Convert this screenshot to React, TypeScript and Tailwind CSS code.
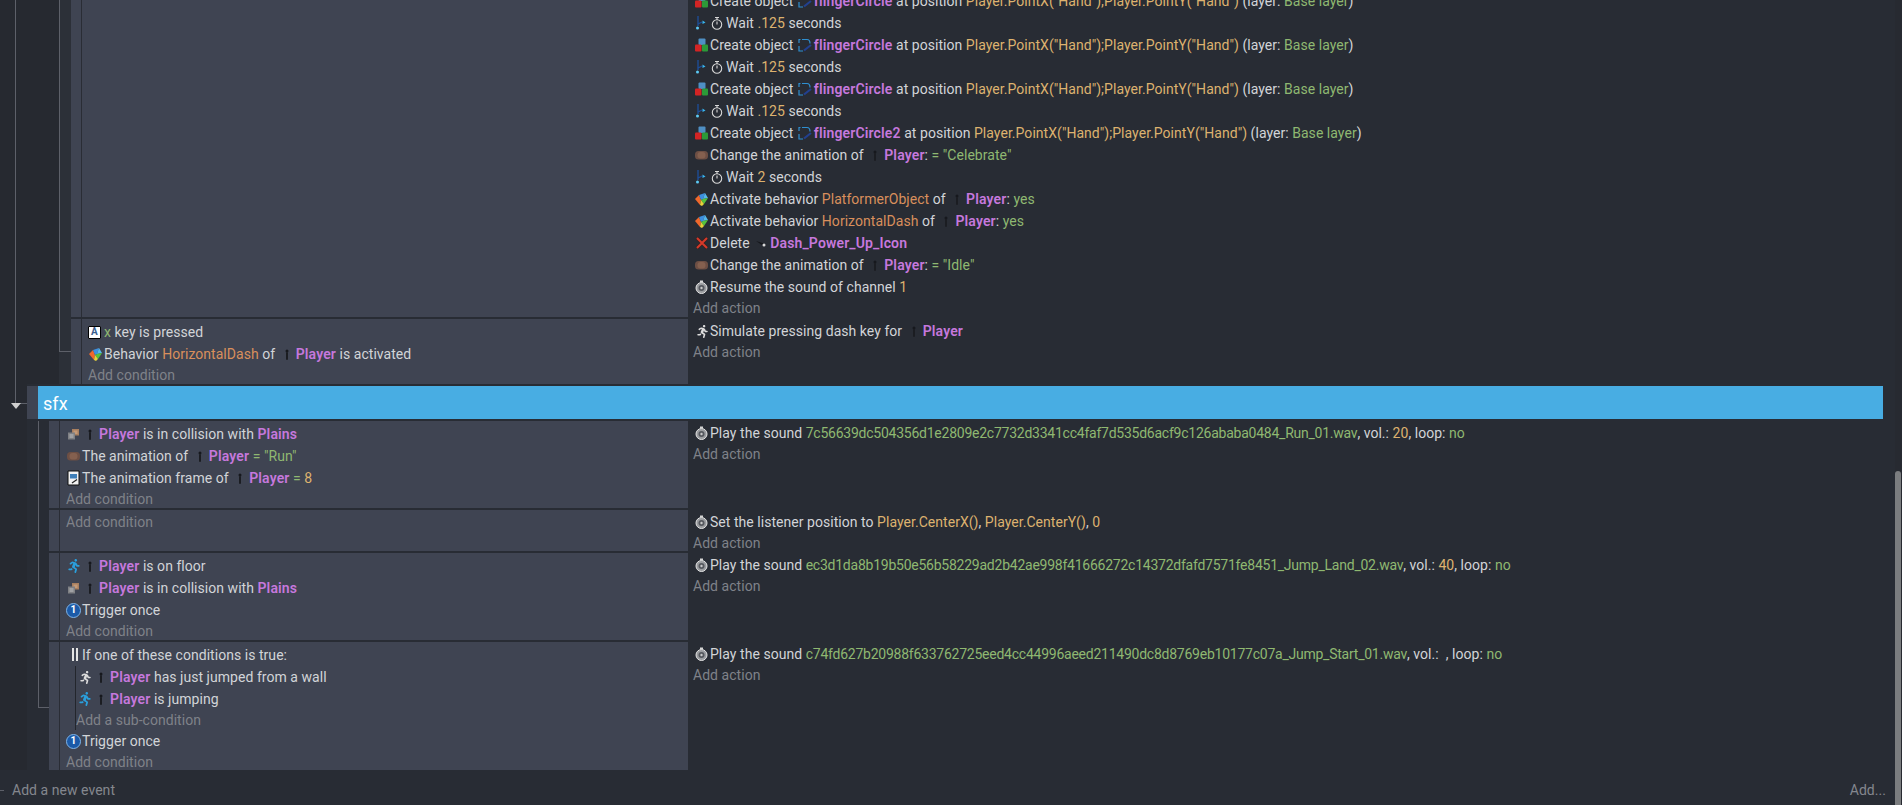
import type { ReactNode } from 'react';
import { FaRunning } from 'react-icons/fa';

const K = ({ children }: { children: ReactNode }) => <span className="font-semibold tracking-[0.15px] text-[#c678dd]">{children}</span>;
const O = ({ children }: { children: ReactNode }) => <span className="text-[#d98f5c]">{children}</span>;
const Y = ({ children }: { children: ReactNode }) => <span className="text-[#ddb26f]">{children}</span>;
const G = ({ children }: { children: ReactNode }) => <span className="text-[#8fb871]">{children}</span>;

// small inline object icons
const PlayerIcon = () => (
  <svg viewBox="0 0 16 16" className="inline-block h-4 w-4 mr-px align-[-3px]">
    <circle cx="8" cy="5" r="1.5" fill="#16181d" />
    <rect x="7" y="6" width="2" height="8" rx="1" fill="#1b1d22" />
  </svg>
);

const FlingerIcon = () => (
  <svg viewBox="0 0 16 16" className="inline-block h-4 w-4 mr-px align-[-3px]" fill="none">
    <path d="M2 6V2.500H3.500M5 2.500H10Q13 2.500 13 6.500" stroke="#2f8fd0" strokeWidth="1.200" />
    <path d="M2 9V14H6" stroke="#2f8fd0" strokeWidth="1.200" />
    <path d="M7 13.500L14 8" stroke="#22408f" strokeWidth="2.200" />
  </svg>
);

const DashIcon = () => (
  <svg viewBox="0 0 16 16" className="inline-block h-4 w-4 mr-px align-[-3px]">
    <path d="M3 6L11 8.500L9 10Z" fill="#14161a" />
    <circle cx="11" cy="10" r="1.500" fill="#d8d8d8" />
  </svg>
);

// row icons, 16px boxes
const Cubes = () => (
  <svg viewBox="0 0 16 16" className="h-4 w-4 shrink-0">
    <rect x="4.500" y="1.500" width="7" height="6.500" rx="1" fill="#4f8fc4" />
    <rect x="1" y="7.500" width="6.500" height="7" rx="1" fill="#d32424" />
    <rect x="8" y="7.500" width="6" height="7" rx="1" fill="#2c9a38" />
  </svg>
);

const WaitIcons = () => (
  <>
    <svg viewBox="0 0 16 16" className="h-4 w-4 shrink-0" fill="none">
      <path d="M4 1V11" stroke="#1d4f9c" strokeWidth="1.300" />
      <path d="M4 9L8 7" stroke="#1d4f9c" strokeWidth="1.300" />
      <path d="M8.500 5.500L11.500 7.500L8.500 9Z" fill="#38b6f0" />
      <circle cx="3.500" cy="13" r="1.500" fill="#5ccaf5" />
    </svg>
    <svg viewBox="0 0 16 16" className="h-4 w-4 shrink-0" fill="none" stroke="#d8d8d8">
      <circle cx="7" cy="9.500" r="4.700" strokeWidth="1.100" />
      <path d="M5 2.500H9M7 2.500V5M7 6.500V9.500" strokeWidth="1.100" />
    </svg>
  </>
);

const AnimIcon = () => (
  <svg viewBox="0 0 16 16" className="h-4 w-4 shrink-0 blur-[0.4px]">
    <rect x="1" y="4" width="13" height="8.500" rx="3.500" fill="#6d4f44" />
    <rect x="3.500" y="5" width="8" height="6.500" rx="3" fill="#84604f" />
  </svg>
);

const Gem = () => (
  <svg viewBox="0 0 16 16" className="h-4 w-4 shrink-0">
    <path d="M1 8L5 4L7 9L6 14Z" fill="#f0682c" />
    <path d="M5 4L11 2L9 8L7 9Z" fill="#3d8fe0" />
    <path d="M11 2L14 7L9 8Z" fill="#55b7ea" />
    <path d="M7 9L9 8L14 7L10 13Z" fill="#55c23c" />
    <path d="M6 14L7 9L10 13L8 15Z" fill="#e6d23a" />
  </svg>
);

const DeleteIcon = () => (
  <svg viewBox="0 0 16 16" className="h-4 w-4 shrink-0" fill="none">
    <path d="M3 3L13 13M13 3L3 13" stroke="#3a2020" strokeWidth="3.500" />
    <path d="M3 3L13 13M13 3L3 13" stroke="#d63a2a" strokeWidth="2" />
  </svg>
);

const SoundIcon = () => (
  <svg viewBox="0 0 16 16" className="h-4 w-4 shrink-0" fill="none">
    <circle cx="7.500" cy="9" r="5.500" fill="#9a9c9f" stroke="#e2e2e2" />
    <circle cx="7.500" cy="9" r="3" fill="#55585e" />
    <circle cx="7.500" cy="9" r="1.200" fill="#c8c8c8" />
    <rect x="6" y="1.500" width="3" height="2" fill="#d6d6d6" />
  </svg>
);

const WhiteRunner = () => (
  <span className="flex h-4 w-4 shrink-0 items-center justify-center">
    <FaRunning className="h-[13px] w-[13px] text-[#dcdcdc]" />
  </span>
);

const BlueRunner = () => (
  <span className="flex h-4 w-4 shrink-0 items-center justify-center">
    <FaRunning className="h-[14px] w-[14px] text-[#2a9fdc]" />
  </span>
);

const KeyIcon = () => (
  <span className="flex h-4 w-4 shrink-0 items-center">
    <span className="flex h-[13px] w-[13px] items-center justify-center rounded-[1px] border border-black bg-white text-[10px] font-bold text-[#3a5f8f]">A</span>
  </span>
);

const Collision = () => (
  <svg viewBox="0 0 16 16" className="h-4 w-4 shrink-0">
    <rect x="6" y="3" width="7" height="6.500" fill="#a87f5f" />
    <rect x="7.500" y="4.500" width="4" height="3.500" fill="#c49a78" />
    <rect x="2" y="6.500" width="7" height="7" fill="#7f8084" />
    <rect x="3.500" y="8" width="4" height="4" fill="#a0a1a4" />
  </svg>
);

const FrameIcon = () => (
  <svg viewBox="0 0 16 16" className="h-4 w-4 shrink-0">
    <path d="M2 1H13V15H2Z" fill="#f2f2f2" stroke="#111" />
    <rect x="4" y="4" width="7" height="4.500" fill="#3f7fb8" />
    <path d="M6 13L11 9.500" stroke="#222" strokeWidth="1.200" />
  </svg>
);

const OnceIcon = () => (
  <span className="flex h-4 w-4 shrink-0 items-center">
    <span className="flex h-[15px] w-[15px] items-center justify-center rounded-full border border-[#7fb4e8] bg-[#1b5aa8] text-[10px] font-bold text-white">1</span>
  </span>
);

const OrIcon = () => (
  <span className="flex h-4 w-4 shrink-0 justify-center gap-[2px] pl-[1px] pt-px">
    <span className="h-[13px] w-[2px] bg-[#e4e4e4]" />
    <span className="h-[13px] w-[2px] bg-[#e4e4e4]" />
  </span>
);

const Row = ({ icon, children }: { icon: ReactNode; children: ReactNode }) => (
  <div className="flex h-[22px] items-center whitespace-pre">
    {icon}
    <span>{children}</span>
  </div>
);

const AddRow = ({ label }: { label: string }) => (
  <div className="flex h-[19px] items-center text-[#7f8289]">{label}</div>
);

const Hash = ({ file, vol }: { file: string; vol?: string }) => (
  <Row icon={<SoundIcon />}>
    Play the sound <span className="tracking-[-0.24px]"><G>{file}</G></span>, vol.: <Y>{vol}</Y>{vol ? '' : ' '}, loop: <G>no</G>
  </Row>
);

const CreateRow = ({ name }: { name: string }) => (
  <Row icon={<Cubes />}>
    Create object <FlingerIcon />
    <K>{name}</K> at position <Y>Player.PointX("Hand");Player.PointY("Hand")</Y> (layer: <G>Base layer</G>)
  </Row>
);

const WaitRow = ({ time }: { time: string }) => (
  <Row icon={<WaitIcons />}>
    Wait <Y>{time}</Y> seconds
  </Row>
);

const Player = () => (
  <>
    <PlayerIcon />
    <K>Player</K>
  </>
);

// one event: gutter tab + conditions cell + actions cell
const Event = ({ height, pad, cond, conditions, actions }: { height: string; pad: string; cond: string; conditions: ReactNode; actions: ReactNode }) => (
  <div className={`flex ${height}`}>
    <div className="w-[10px] shrink-0 border-r border-[#2a2d35] bg-[#3f4452] box-content" />
    <div className={`${cond} shrink-0 overflow-hidden bg-[#3f4452] pl-[6px] pt-[2px]`}>{conditions}</div>
    <div className={`min-w-0 flex-1 overflow-hidden pl-[6px] ${pad}`}>{actions}</div>
  </div>
);

const AddCondition = () => <AddRow label="Add condition" />;
const AddAction = () => <div className="-ml-px"><AddRow label="Add action" /></div>;

export default function App() {
  return (
    <div className="flex h-[805px] w-full overflow-hidden bg-[#282c34] text-[14px] leading-[22px] tracking-[0.04px] text-[#d2d4d8] font-['Roboto',sans-serif]">
      <div className="min-w-0 flex-1">
        <div className="-mt-[10px] flex">
          {/* outer tree line */}
          <div className="w-[27px] shrink-0 bg-[#262930] pl-[15px]">
            <div className="relative h-[414px] w-[12px] border-b border-l border-[#5d6069]">
              <svg viewBox="0 0 10 6" className="absolute -bottom-[6px] -left-[5px] h-[6px] w-[10px]">
                <path d="M0 0H10L5 6Z" fill="#cfcfcf" />
              </svg>
            </div>
          </div>

          <div className="min-w-0 flex-1">
            {/* events above the group */}
            <div className="flex bg-[#282c34]">
              <div className="w-[32px] shrink-0 bg-[#262930]" />
              <div className="w-[12px] shrink-0 bg-[#2c3038]">
                <div className="h-[362px] w-[12px] border-b border-l border-[#5d6069]" />
              </div>
              <div className="flex min-w-0 flex-1 flex-col gap-[2px]">
                <Event
                  height="h-[327px]"
                  pad="pt-0"
                  cond="w-[606px]"
                  conditions={null}
                  actions={
                    <>
                      <CreateRow name="flingerCircle" />
                      <WaitRow time=".125" />
                      <CreateRow name="flingerCircle" />
                      <WaitRow time=".125" />
                      <CreateRow name="flingerCircle" />
                      <WaitRow time=".125" />
                      <CreateRow name="flingerCircle2" />
                      <Row icon={<AnimIcon />}>
                        Change the animation of <Player />: <G>=</G> <G>"Celebrate"</G>
                      </Row>
                      <WaitRow time="2" />
                      <Row icon={<Gem />}>
                        Activate behavior <O>PlatformerObject</O> of <Player />: <G>yes</G>
                      </Row>
                      <Row icon={<Gem />}>
                        Activate behavior <O>HorizontalDash</O> of <Player />: <G>yes</G>
                      </Row>
                      <Row icon={<DeleteIcon />}>
                        Delete <DashIcon />
                        <K>Dash_Power_Up_Icon</K>
                      </Row>
                      <Row icon={<AnimIcon />}>
                        Change the animation of <Player />: <G>=</G> <G>"Idle"</G>
                      </Row>
                      <Row icon={<SoundIcon />}>
                        Resume the sound of channel <Y>1</Y>
                      </Row>
                      <AddAction />
                    </>
                  }
                />
                <Event
                  height="h-[65px]"
                  pad="pt-px"
                  cond="w-[606px]"
                  conditions={
                    <>
                      <Row icon={<KeyIcon />}>
                        <G>x</G> key is pressed
                      </Row>
                      <Row icon={<Gem />}>
                        Behavior <O>HorizontalDash</O> of <Player /> is activated
                      </Row>
                      <AddCondition />
                    </>
                  }
                  actions={
                    <>
                      <Row icon={<WhiteRunner />}>
                        Simulate pressing dash key for <Player />
                      </Row>
                      <AddAction />
                    </>
                  }
                />
              </div>
            </div>

            {/* group header */}
            <div className="mt-[2px] mr-[12px] flex h-[33px]">
              <div className="w-[11px] shrink-0 bg-[#3f4452]" />
              <div className="flex-1 bg-[#48ade3] pl-[5px] text-[18px] leading-[35px] text-white">sfx</div>
            </div>

            {/* events in the group */}
            <div className="mt-[2px] flex">
              <div className="w-[11px] shrink-0 border-l border-transparent" />
              <div className="w-[11px] shrink-0">
                <div className="h-[287px] w-[11px] border-b border-l border-[#5d6069]" />
              </div>
              <div className="flex min-w-0 flex-1 flex-col gap-[2px]">
                <Event
                  height="h-[87px]"
                  pad="pt-px"
                  cond="w-[628px]"
                  conditions={
                    <>
                      <Row icon={<Collision />}>
                        <Player /> is in collision with <K>Plains</K>
                      </Row>
                      <Row icon={<AnimIcon />}>
                        The animation of <Player /> <G>=</G> <G>"Run"</G>
                      </Row>
                      <Row icon={<FrameIcon />}>
                        The animation frame of <Player /> <G>=</G> <Y>8</Y>
                      </Row>
                      <AddCondition />
                    </>
                  }
                  actions={
                    <>
                      <Hash file="7c56639dc504356d1e2809e2c7732d3341cc4faf7d535d6acf9c126ababa0484_Run_01.wav" vol="20" />
                      <AddAction />
                    </>
                  }
                />
                <Event
                  height="h-[41px]"
                  pad="pt-px"
                  cond="w-[628px]"
                  conditions={<AddCondition />}
                  actions={
                    <>
                      <Row icon={<SoundIcon />}>
                        Set the listener position to <Y>Player.CenterX()</Y>, <Y>Player.CenterY()</Y>, <Y>0</Y>
                      </Row>
                      <AddAction />
                    </>
                  }
                />
                <Event
                  height="h-[87px]"
                  pad="pt-px"
                  cond="w-[628px]"
                  conditions={
                    <>
                      <Row icon={<BlueRunner />}>
                        <Player /> is on floor
                      </Row>
                      <Row icon={<Collision />}>
                        <Player /> is in collision with <K>Plains</K>
                      </Row>
                      <Row icon={<OnceIcon />}>Trigger once</Row>
                      <AddCondition />
                    </>
                  }
                  actions={
                    <>
                      <Hash file="ec3d1da8b19b50e56b58229ad2b42ae998f41666272c14372dfafd7571fe8451_Jump_Land_02.wav" vol="40" />
                      <AddAction />
                    </>
                  }
                />
                <Event
                  height="h-[128px]"
                  pad="pt-px"
                  cond="w-[628px]"
                  conditions={
                    <>
                      <Row icon={<OrIcon />}>If one of these conditions is true:</Row>
                      <div className="ml-[9px] border-l border-[#23262c]">
                        <div className="pl-px">
                          <Row icon={<WhiteRunner />}>
                            <Player /> has just jumped from a wall
                          </Row>
                          <Row icon={<BlueRunner />}>
                            <Player /> is jumping
                          </Row>
                        </div>
                        <div className="flex h-[20px] items-center text-[#7f8289]">Add a sub-condition</div>
                      </div>
                      <Row icon={<OnceIcon />}>Trigger once</Row>
                      <AddCondition />
                    </>
                  }
                  actions={
                    <>
                      <Hash file="c74fd627b20988f633762725eed4cc44996aeed211490dc8d8769eb10177c07a_Jump_Start_01.wav" />
                      <AddAction />
                    </>
                  }
                />
              </div>
            </div>
          </div>
        </div>

        {/* footer */}
        <div className="flex h-[40px] items-center justify-between pr-[9px] text-[#84878e]">
          <div className="flex items-center">
            <span className="mr-[8px] h-px w-[4px] bg-[#5d6069]" />
            <span>Add a new event</span>
          </div>
          <span>Add...</span>
        </div>
      </div>

      {/* scrollbar */}
      <div className="w-[7px] shrink-0 bg-[#272a31] pt-[471px]">
        <div className="h-full w-[6px] rounded-t-[3px] bg-[#7b7d7f]" />
      </div>
    </div>
  );
}
